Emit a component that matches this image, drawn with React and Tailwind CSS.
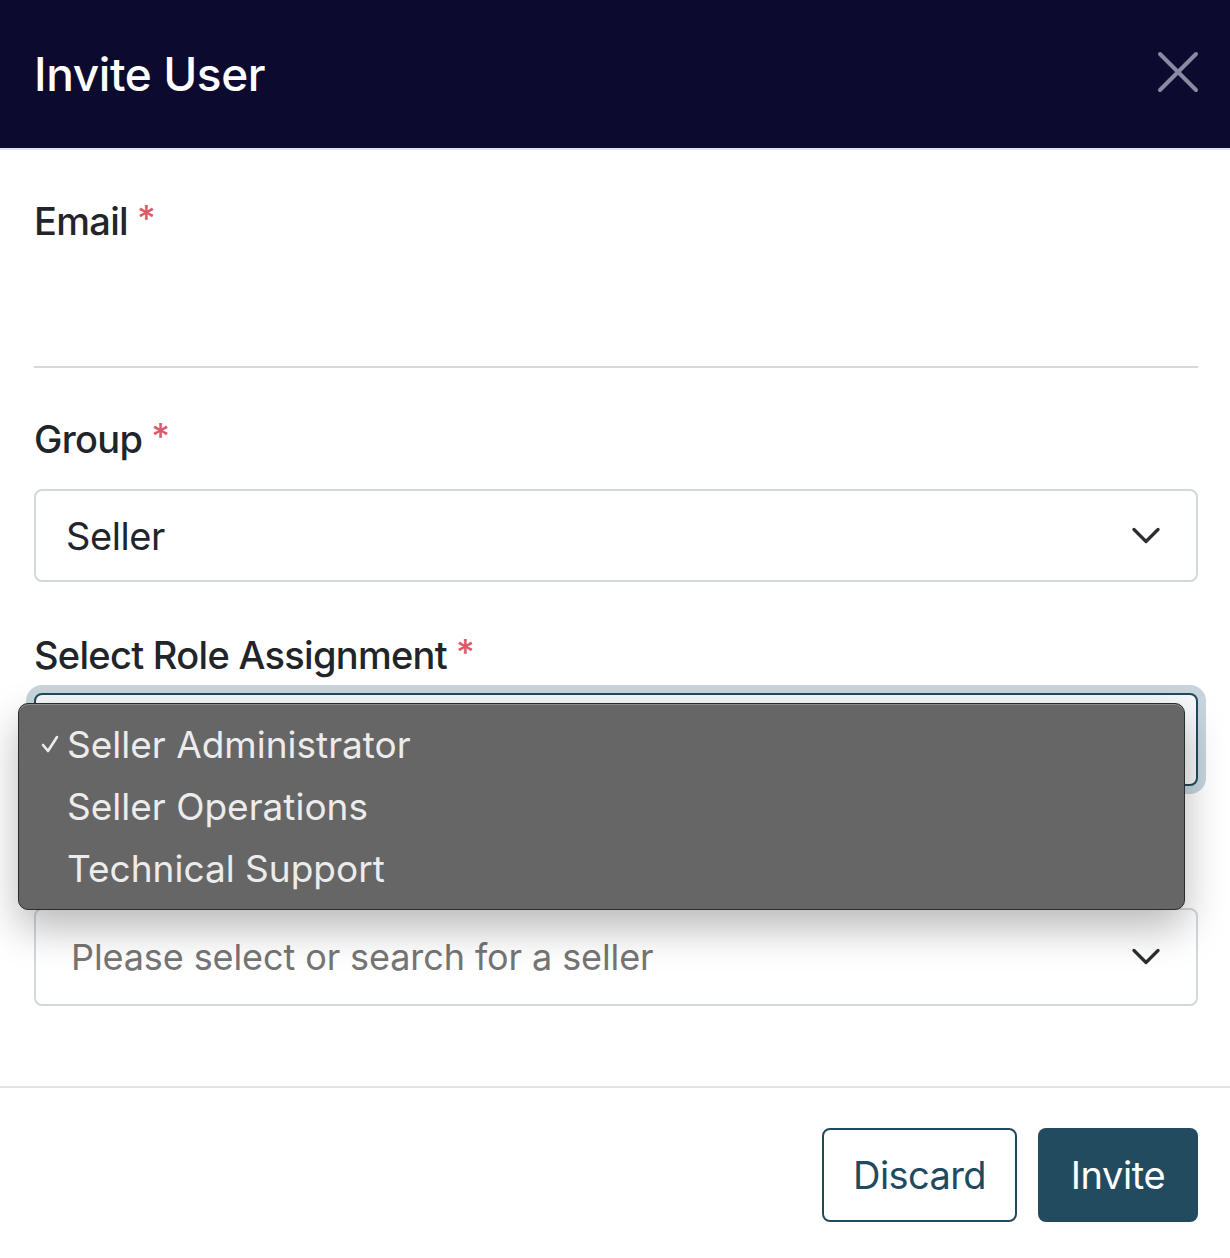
import React from "react";

function Chevron() {
  return (
    <svg width="28" height="18" viewBox="0 0 28 18" fill="none" className="shrink-0">
      <path d="M2 2.5 L14 14.5 L26 2.5" stroke="#2b2f33" strokeWidth="3.2" strokeLinecap="round" strokeLinejoin="round" />
    </svg>
  );
}

function Label({ children, className = "" }) {
  return (
    <div className={"flex items-start leading-none text-[38px] font-medium text-[#212529] tracking-[-0.7px] " + className}>
      <span>{children}</span>
      <span className="ml-[9px] text-[36px] font-medium text-[#dc5a6a] leading-none -mt-[2px]">*</span>
    </div>
  );
}

export default function App() {
  return (
    <div className="relative w-[1230px] h-[1258px] bg-white overflow-hidden" style={{ fontFamily: "Inter, 'Noto Sans', sans-serif" }}>
      <header className="h-[150px] bg-[#0c0b2f] border-b-2 border-[#dfe4e8] flex items-center justify-between pl-[34px] pr-[31px]">
        <h1 className="text-white text-[46px] font-medium leading-none tracking-[-0.4px]">Invite User</h1>
        <svg width="42" height="42" viewBox="0 0 42 42" fill="none" className="-mt-[4px]">
          <path d="M3 3 L39 39 M39 3 L3 39" stroke="#8b8aa3" strokeWidth="4" strokeLinecap="round" />
        </svg>
      </header>

      <div className="pl-[34px] pr-[32px]">
        <Label className="mt-[52px]">Email</Label>
        <div className="mt-[20px] h-[108px] border-b-2 border-[#d4d8dc]" />

        <Label className="mt-[52px]">Group</Label>
        <div className="mt-[31px] h-[93px] rounded-[8px] border-2 border-[#d3d8dc] flex items-center justify-between pl-[30px] pr-[36px]">
          <span className="text-[38px] leading-none text-[#212529] tracking-[-0.4px]">Seller</span>
          <Chevron />
        </div>

        <Label className="mt-[54px]">Select Role Assignment</Label>
        <div className="mt-[19px] h-[93px] rounded-[8px] border-2 border-[#1f4a5f] bg-[#f7f8f9] shadow-[0_0_0_8px_#c8d5dd]" />

        <div className="mt-[122px] h-[98px] rounded-[8px] border-2 border-[#d3d8dc] flex items-center justify-between pl-[35px] pr-[36px]">
          <span className="text-[36px] leading-none text-[#757575] tracking-[-0.1px]">Please select or search for a seller</span>
          <Chevron />
        </div>
      </div>

      <div className="mt-[80px] border-t-2 border-[#e0e4e7]" />

      <div className="flex justify-end gap-[21px] pr-[32px] mt-[40px]">
        <button className="h-[94px] w-[195px] rounded-[8px] border-2 border-[#1f4a5f] text-[#1f4a5f] text-[38px] leading-none bg-white tracking-[-0.6px]">Discard</button>
        <button className="h-[94px] w-[160px] rounded-[8px] bg-[#224b60] text-white text-[38px] leading-none tracking-[-0.4px]">Invite</button>
      </div>

      <div className="absolute left-[18px] top-[703px] w-[1167px] h-[207px] rounded-[10px] bg-[#666666] border border-[#2b2b2b] shadow-[0_18px_40px_rgba(0,0,0,0.28),inset_0_1px_0_rgba(255,255,255,0.25)] py-[9px] text-[#ececec] text-[37px] leading-none" style={{ fontFamily: "Inter, 'Noto Sans', sans-serif" }}>
        <div className="h-[62px] flex items-center">
          <span className="w-[48px] flex justify-end pr-[8px]">
            <svg width="18" height="18" viewBox="0 0 18 18" fill="none">
              <path d="M2 10 L7 16 L16 2" stroke="#ececec" strokeWidth="2.6" strokeLinecap="round" strokeLinejoin="round" />
            </svg>
          </span>
          <span>Seller Administrator</span>
        </div>
        <div className="h-[62px] flex items-center pl-[48px]">Seller Operations</div>
        <div className="h-[62px] flex items-center pl-[48px]">Technical Support</div>
      </div>
    </div>
  );
}
